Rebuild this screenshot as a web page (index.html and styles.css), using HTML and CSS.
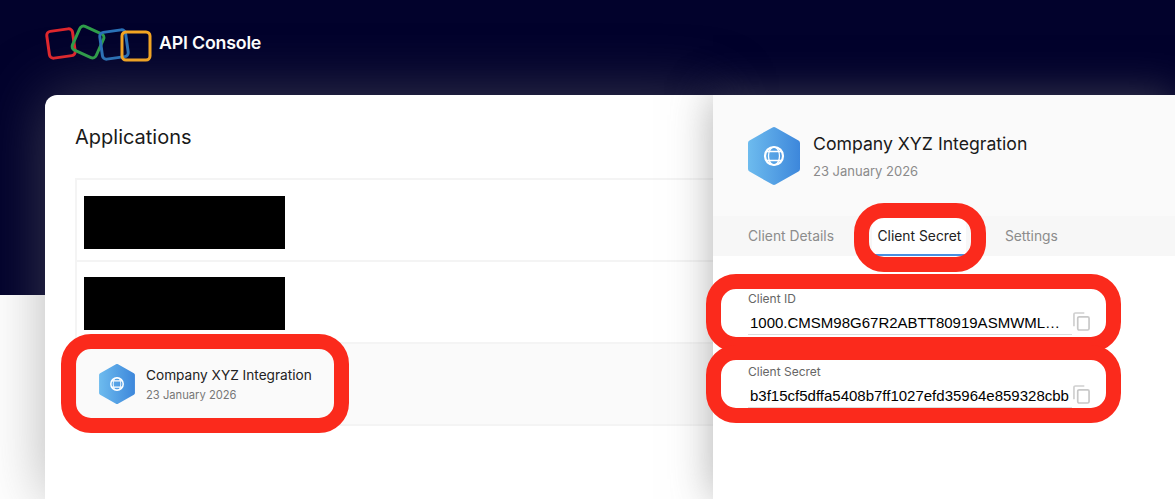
FILE: index.html
```html
<!DOCTYPE html>
<html lang="en">
<head>
<meta charset="utf-8">
<title>API Console</title>
<link rel="stylesheet" href="styles.css">
</head>
<body>
<svg class="defs" width="0" height="0" aria-hidden="true">
  <defs>
    <linearGradient id="hexfill" gradientUnits="userSpaceOnUse" x1="0" y1="0" x2="52" y2="0">
      <stop offset="0" stop-color="#6dbbee"/>
      <stop offset="1" stop-color="#3d87db"/>
    </linearGradient>
    <symbol id="appicon" viewBox="0 0 52 58">
      <path d="M26 3 L49 16 V42 L26 55 L3 42 V16 Z" fill="url(#hexfill)" stroke="url(#hexfill)" stroke-width="6" stroke-linejoin="round"/>
      <g fill="none" stroke="#fff">
        <circle cx="26" cy="29" r="9" stroke-width="2.200"/>
        <ellipse cx="26" cy="29" rx="5.500" ry="9" stroke-width="1.300"/>
        <path d="M18.500 24.500 H33.500 M18.500 33.500 H33.500" stroke-width="1.700"/>
      </g>
    </symbol>
    <symbol id="copy" viewBox="0 0 18 20">
      <path d="M1 15 V2.500 A1.500 1.500 0 0 1 2.500 1 H12" fill="none" stroke="#d0d0d0" stroke-width="1.800"/>
      <rect x="5" y="5" width="12" height="14" rx="1.500" fill="none" stroke="#c8c8c8" stroke-width="1.800"/>
    </symbol>
  </defs>
</svg>

<header class="topbar">
  <svg class="brand-logo" viewBox="0 0 110 40" width="110" height="40" aria-hidden="true">
    <g fill="none" stroke-width="3">
      <rect x="3" y="6" width="26" height="27" rx="4" stroke="#e0282e" transform="rotate(-8 16 19.500)"/>
      <rect x="30" y="5" width="26" height="26" rx="4" stroke="#2f9e4a" transform="rotate(24 43 18)"/>
      <rect x="56" y="7" width="26" height="27" rx="4" stroke="#2b72b8" transform="rotate(-8 69 20.500)"/>
      <rect x="77" y="8" width="28" height="28" rx="4" stroke="#f5a623"/>
    </g>
  </svg>
  <span class="brand-name">API Console</span>
</header>

<main class="workspace">
  <section class="apps">
    <h1 class="apps-title">Applications</h1>
    <ul class="app-list">
      <li class="app-row is-hidden"><div class="redacted"></div></li>
      <li class="app-row is-hidden"><div class="redacted"></div></li>
      <li class="app-row is-selected">
        <svg class="app-icon"><use href="#appicon"/></svg>
        <div class="app-text">
          <div class="app-name">Company XYZ Integration</div>
          <div class="app-date">23 January 2026</div>
        </div>
      </li>
    </ul>
  </section>

  <aside class="drawer">
    <div class="drawer-head">
      <svg class="drawer-icon"><use href="#appicon"/></svg>
      <div class="drawer-text">
        <div class="drawer-name">Company XYZ Integration</div>
        <div class="drawer-date">23 January 2026</div>
      </div>
    </div>
    <nav class="tabs">
      <span class="tab">Client Details</span>
      <span class="tab is-active">Client Secret</span>
      <span class="tab">Settings</span>
    </nav>
    <div class="fields">
      <div class="field">
        <div class="field-label">Client ID</div>
        <div class="field-line">
          <div class="field-value">1000.CMSM98G67R2ABTT80919ASMWML…</div>
          <svg class="copy-icon"><use href="#copy"/></svg>
        </div>
      </div>
      <div class="field">
        <div class="field-label">Client Secret</div>
        <div class="field-line">
          <div class="field-value">b3f15cf5dffa5408b7ff1027efd35964e859328cbb</div>
          <svg class="copy-icon"><use href="#copy"/></svg>
        </div>
      </div>
    </div>
  </aside>
</main>

<div class="mark mark-row"></div>
<div class="mark mark-tab"></div>
<div class="mark mark-id"></div>
<div class="mark mark-secret"></div>
</body>
</html>
```

FILE: styles.css
```css
* { box-sizing: border-box; }

html, body {
  margin: 0;
  height: 499px;
  overflow: hidden;
}

body {
  position: relative;
  background: linear-gradient(#02022c 0, #02022c 295px, #fff 295px);
  font-family: Inter, "Noto Sans", sans-serif;
  color: #111;
}

.defs { position: absolute; }

.topbar {
  height: 95px;
  display: flex;
  align-items: flex-start;
  padding: 24px 0 0 45px;
}

.brand-logo { flex: none; }

.brand-name {
  margin: 9px 0 0 4px;
  color: #fff;
  font-size: 17.800px;
  font-weight: 600;
  line-height: 20px;
  letter-spacing: -0.2px;
}

.workspace {
  display: flex;
  height: 404px;
  margin-left: 45px;
}

.apps {
  width: 668px;
  flex: none;
  background: #fff;
  border-top-left-radius: 12px;
  padding: 30px 0 0 30px;
  box-shadow: 0 0 60px rgba(112, 112, 112, 0.5);
}

.apps-title {
  margin: 0;
  font-size: 20px;
  font-weight: 400;
  line-height: 24px;
  color: #1a1a1a;
}

.app-list {
  list-style: none;
  margin: 29px 0 0;
  padding: 0;
  border: 2px solid #f4f4f4;
  border-right: 0;
}

.app-row {
  height: 82px;
  display: flex;
  align-items: center;
  padding-left: 7px;
  border-bottom: 2px solid #f4f4f4;
}

.app-row.is-hidden { padding-top: 5px; }

.app-row.is-hidden + .app-row.is-hidden { padding-top: 3px; }

.app-row:last-child {
  height: 80px;
  border-bottom: 0;
}

.app-row .redacted {
  width: 201px;
  height: 53px;
  background: #000;
}

.is-selected {
  background: #fafafa;
  padding-left: 22px;
}

.app-icon {
  width: 36px;
  height: 40px;
  flex: none;
}

.app-text { margin-left: 11px; }

.app-name {
  font-size: 13.650px;
  line-height: 18px;
  color: #222;
}

.app-date {
  margin-top: 4px;
  font-size: 11.200px;
  line-height: 15px;
  color: #777;
}

.drawer {
  width: 462px;
  flex: none;
  background: #fff;
  position: relative;
  box-shadow: 0 0 40px rgba(112, 112, 112, 0.55);
}

.drawer-head {
  height: 121px;
  display: flex;
  align-items: flex-start;
  padding: 31px 0 0 35px;
  background: #fafafa;
}

.drawer-icon {
  width: 52px;
  height: 60px;
  flex: none;
}

.drawer-text { margin-left: 13px; }

.drawer-name {
  margin-top: 5px;
  font-size: 17.650px;
  line-height: 26px;
  color: #1a1a1a;
}

.drawer-date {
  margin-top: 5px;
  font-size: 13px;
  line-height: 18px;
  color: #8a8a8a;
}

.tabs {
  height: 40px;
  display: flex;
  gap: 43.500px;
  padding-left: 35px;
  background: #f7f7f7;
}

.tab {
  font-size: 13.850px;
  line-height: 40px;
  color: #8c8c8c;
  position: relative;
}

.tab.is-active {
  color: #222;
  background: #fff;
  box-shadow: -5px 0 0 #fff, 5px 0 0 #fff;
}

.tab.is-active::after {
  content: "";
  position: absolute;
  left: -5px;
  right: -5px;
  bottom: 0;
  height: 2px;
  background: #4a8fe0;
}

.fields {
  padding: 35px 0 0 35px;
}

.field { height: 73px; }

.field-label {
  font-size: 12px;
  line-height: 16px;
  color: #666;
}

.field-line {
  display: flex;
  align-items: flex-end;
  margin-top: 5px;
  width: 343px;
}

.field-value {
  width: 324px;
  flex: none;
  padding: 0 0 2px 2px;
  border-bottom: 1px solid #dcdcdc;
  font-family: "Liberation Sans", Arial, sans-serif;
  font-size: 15px;
  line-height: 19px;
  color: #000;
  white-space: nowrap;
}

.copy-icon {
  width: 17px;
  height: 19px;
  flex: none;
  margin: 0 0 4px 1px;
}

.mark {
  position: absolute;
  border: 15px solid #fb2a1c;
  border-radius: 30px;
  pointer-events: none;
}

.mark-row { left: 61px; top: 334px; width: 288px; height: 99px; }
.mark-tab { left: 854px; top: 203px; width: 132px; height: 69px; }
.mark-id { left: 706px; top: 274px; width: 415px; height: 78px; }
.mark-secret { left: 706px; top: 345px; width: 415px; height: 78px; }
```
